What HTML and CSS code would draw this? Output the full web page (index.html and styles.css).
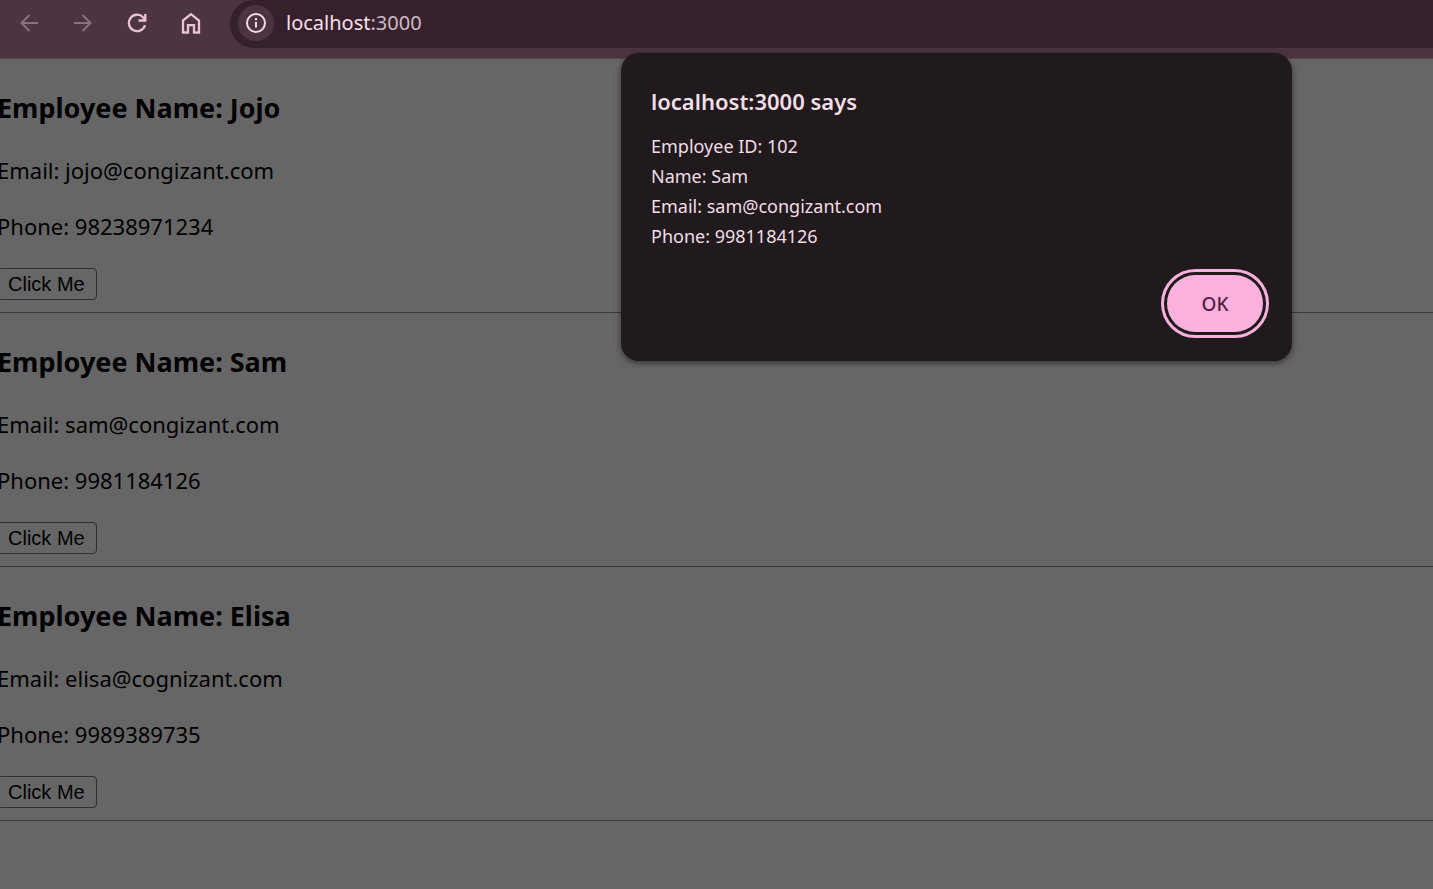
FILE: index.html
```html
<!DOCTYPE html>
<html lang="en">
<head>
<meta charset="utf-8">
<title>localhost:3000</title>
<link rel="stylesheet" href="styles.css">
</head>
<body>
<header class="toolbar">
  <nav class="nav" aria-label="Browser navigation">
    <button class="nav-button" type="button" aria-label="Back" disabled>
      <svg class="icon" viewBox="0 0 24 24"><path d="M21 12H4M12.500 4L4.500 12l8 8"/></svg>
    </button>
    <button class="nav-button" type="button" aria-label="Forward" disabled>
      <svg class="icon" viewBox="0 0 24 24"><path d="M3 12h17M11.500 4l8 8l-8 8"/></svg>
    </button>
    <button class="nav-button" type="button" aria-label="Reload">
      <svg class="icon reload" viewBox="0 0 24 24"><path d="M20 14.200A8.200 8.200 0 1 1 18 6.200L20 8.500M20.300 3v6.500H13.500"/></svg>
    </button>
    <button class="nav-button" type="button" aria-label="Home">
      <svg class="icon home" viewBox="0 0 24 24"><path d="M4 9.500L12 3.200L20 9.500V21.500H15V14.200H9V21.500H4Z"/></svg>
    </button>
  </nav>
  <div class="address">
    <button class="info-button" type="button" aria-label="View site information">
      <svg class="icon" viewBox="0 0 24 24"><circle cx="12" cy="12" r="9"/><path d="M12 11v5.500M12 7v2.200"/></svg>
    </button>
    <div class="url" role="textbox" aria-label="Address">localhost<span class="port">:3000</span></div>
  </div>
</header>
<main class="page">
  <section class="employee">
    <h3 class="name">Employee Name: Jojo</h3>
    <p class="detail">Email: jojo@congizant.com</p>
    <p class="detail">Phone: 98238971234</p>
    <button class="click" type="button">Click Me</button>
  </section>
  <section class="employee">
    <h3 class="name">Employee Name: Sam</h3>
    <p class="detail">Email: sam@congizant.com</p>
    <p class="detail">Phone: 9981184126</p>
    <button class="click" type="button">Click Me</button>
  </section>
  <section class="employee">
    <h3 class="name">Employee Name: Elisa</h3>
    <p class="detail">Email: elisa@cognizant.com</p>
    <p class="detail">Phone: 9989389735</p>
    <button class="click" type="button">Click Me</button>
  </section>
</main>
<div class="alert" role="alertdialog" aria-labelledby="alert-title" aria-describedby="alert-text">
  <h2 class="alert-title" id="alert-title">localhost:3000 says</h2>
  <div class="alert-text" id="alert-text">
    <p class="alert-line">Employee ID: 102</p>
    <p class="alert-line">Name: Sam</p>
    <p class="alert-line">Email: sam@congizant.com</p>
    <p class="alert-line">Phone: 9981184126</p>
  </div>
  <button class="ok" type="button">OK</button>
</div>
</body>
</html>
```

FILE: styles.css
```css
* {
  box-sizing: border-box;
}

body {
  margin: 0;
  min-height: 100vh;
  overflow-x: hidden;
  background: #666;
  color: #000;
  font-family: "Segoe UI", "Noto Sans", sans-serif;
}

.toolbar {
  display: flex;
  align-items: flex-start;
  padding-bottom: 10px;
  background: #4c3441;
  border-bottom: 1px solid #594a52;
}

.nav {
  display: flex;
  gap: 22px;
  padding: 7px 23px 0 13px;
}

.nav-button {
  display: flex;
  align-items: center;
  justify-content: center;
  width: 32px;
  height: 32px;
  padding: 0;
  border: 0;
  background: none;
  color: #e8c3d6;
}

.nav-button:disabled {
  color: #8c7080;
}

.icon {
  width: 24px;
  height: 24px;
  fill: none;
  stroke: currentColor;
  stroke-width: 2;
}

.reload,
.home {
  stroke-width: 2.300;
}

.address {
  display: flex;
  flex: 1;
  align-items: center;
  gap: 12px;
  height: 48px;
  padding: 0 8px 3px;
  background: #35202c;
  border-radius: 24px 0 0 24px;
}

.info-button {
  display: flex;
  align-items: center;
  justify-content: center;
  width: 36px;
  height: 36px;
  padding: 0;
  border: 0;
  border-radius: 50%;
  background: #4c3441;
  color: #f2dde7;
}

.url {
  color: #f5e0eb;
  font-size: 20px;
  line-height: 32px;
}

.port {
  color: #cfb9c4;
}

.page {
  margin-left: -3px;
}

.employee {
  padding: 30px 0 12px;
  border-bottom: 1px solid #3a3a3a;
}

.name {
  margin: 0 0 27px;
  font-size: 27px;
  line-height: 38px;
}

.detail {
  margin: 0 0 24px;
  font-size: 22px;
  line-height: 32px;
}

.click {
  display: block;
  height: 32px;
  margin-top: 26px;
  padding: 0 11px 0 10px;
  border: 1px solid #303030;
  border-radius: 4px;
  background: #666;
  color: #000;
  font-family: "Liberation Sans", Arial, sans-serif;
  font-size: 20px;
}

.alert {
  position: absolute;
  top: 53px;
  right: 141px;
  display: flex;
  flex-direction: column;
  width: 671px;
  max-width: 100%;
  padding: 32px 29px 29px 30px;
  border-radius: 18px;
  background: #201a1c;
  color: #f3dde7;
  box-shadow: 0 2px 6px rgba(0, 0, 0, 0.5);
}

.alert-title {
  margin: 0 0 14px;
  font-size: 22px;
  font-weight: 600;
  line-height: 32px;
}

.alert-line {
  margin: 0;
  font-size: 18px;
  line-height: 30px;
}

.ok {
  align-self: flex-end;
  width: 96px;
  height: 57px;
  margin-top: 24px;
  border: 0;
  border-radius: 30px;
  outline: 3px solid #fbb1de;
  outline-offset: 3px;
  background: #fbb1de;
  color: #541d43;
  font-family: inherit;
  font-size: 19px;
  font-weight: 500;
}
```
